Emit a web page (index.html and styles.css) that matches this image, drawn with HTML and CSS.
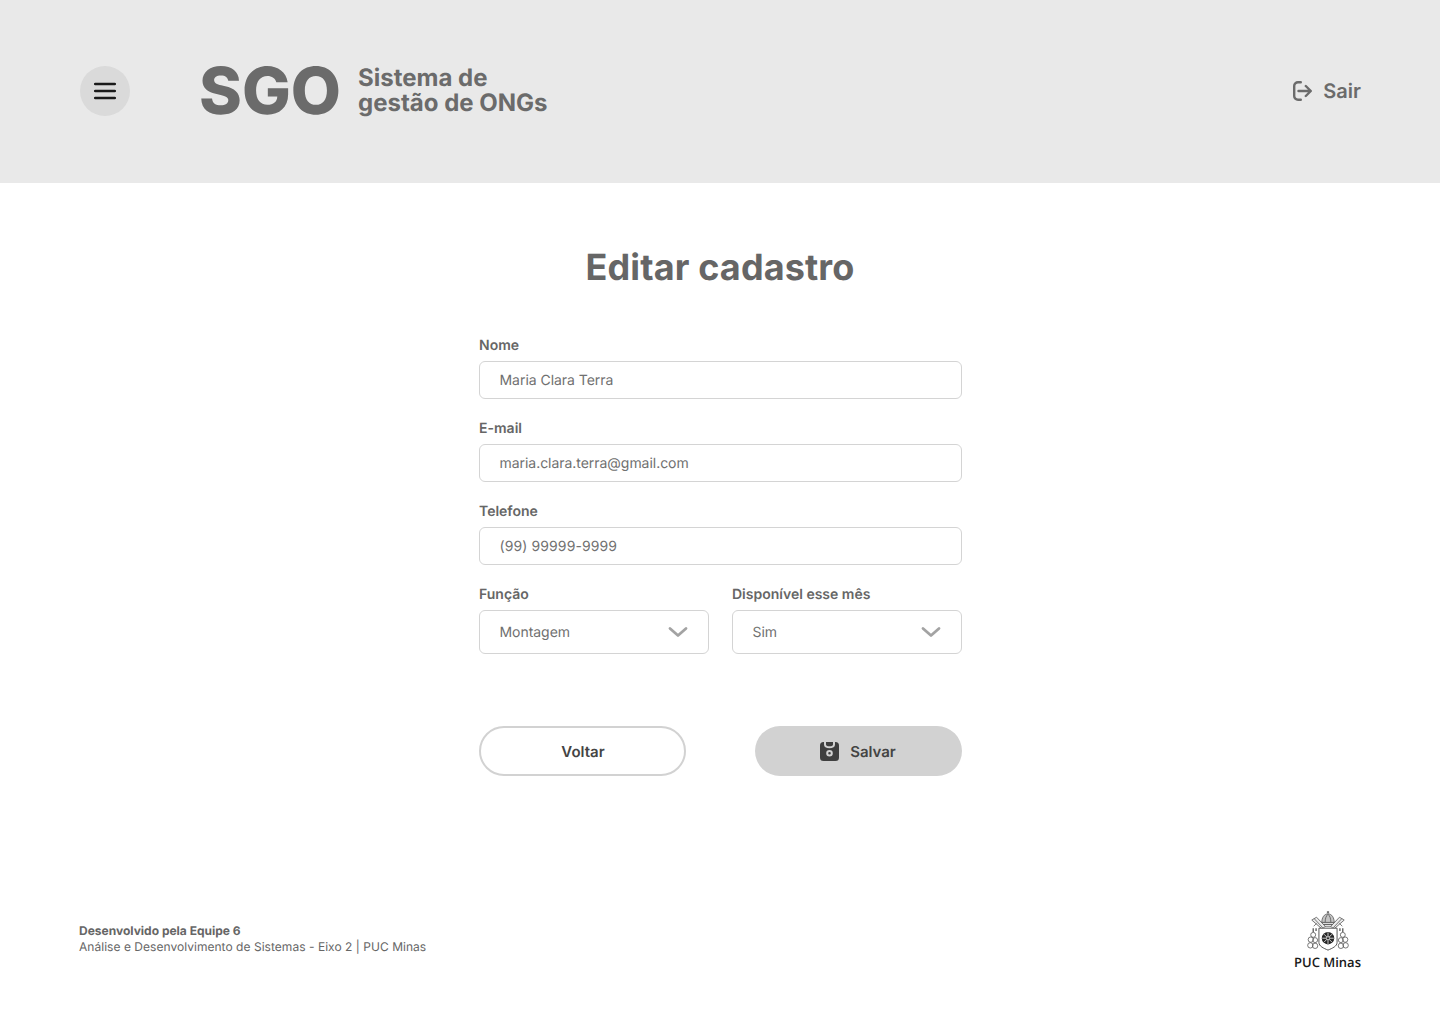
FILE: index.html
```html
<!DOCTYPE html>
<html lang="pt-BR">
<head>
<meta charset="utf-8">
<title>SGO - Editar cadastro</title>
<link rel="stylesheet" href="styles.css">
</head>
<body>
<div class="page">
  <header class="topbar">
    <button class="menu-btn" type="button" aria-label="Menu">
      <svg width="22" height="18" viewBox="0 0 22 18" fill="none" stroke="#1a1a1a" stroke-width="2.600" stroke-linecap="round"><path d="M1.200 2h19.600M1.200 9h19.600M1.200 16h19.600"/></svg>
    </button>
    <div class="brand">
      <span class="brand-name">SGO</span>
      <span class="brand-tag">Sistema de<br>gestão de ONGs</span>
    </div>
    <a class="logout" href="#">
      <svg width="19" height="20" viewBox="0 0 19 20" fill="none" stroke="#6b6b6b" stroke-width="2.400" stroke-linecap="round" stroke-linejoin="round"><path d="M7.800 1.200H5A3.800 3.800 0 0 0 1.200 5v10A3.800 3.800 0 0 0 5 18.800h2.800"/><path d="M5.500 10h12M12.800 5l5 5-5 5"/></svg>
      <span>Sair</span>
    </a>
  </header>

  <main class="content">
    <h1 class="title">Editar cadastro</h1>
    <form class="form">
      <label class="field"><span class="label">Nome</span><span class="input">Maria Clara Terra</span></label>
      <label class="field"><span class="label">E-mail</span><span class="input">maria.clara.terra@gmail.com</span></label>
      <label class="field"><span class="label">Telefone</span><span class="input input-phone">(99) 99999-9999</span></label>
      <div class="row">
        <label class="field"><span class="label">Função</span>
          <span class="input select">Montagem
            <svg width="20" height="12" viewBox="0 0 20 12" fill="none" stroke="#a3a3a3" stroke-width="2.800" stroke-linecap="round" stroke-linejoin="round"><path d="M2 2.500l8 7 8-7"/></svg>
          </span>
        </label>
        <label class="field"><span class="label">Disponível esse mês</span>
          <span class="input select">Sim
            <svg width="20" height="12" viewBox="0 0 20 12" fill="none" stroke="#a3a3a3" stroke-width="2.800" stroke-linecap="round" stroke-linejoin="round"><path d="M2 2.500l8 7 8-7"/></svg>
          </span>
        </label>
      </div>
      <div class="actions">
        <button class="btn btn-outline" type="button">Voltar</button>
        <button class="btn btn-solid" type="button">
          <svg width="19" height="19" viewBox="0 0 19 19"><path fill="#3f3f3f" fill-rule="evenodd" d="M3.500 0H4v2.500C4 5 6 6.300 9.500 6.300S15 5 15 2.500V0h.5A3.500 3.500 0 0 1 19 3.500v12a3.500 3.500 0 0 1-3.500 3.500h-12A3.500 3.500 0 0 1 0 15.500v-12A3.500 3.500 0 0 1 3.500 0zM9.500 8a3.300 3.300 0 1 0 0 6.600 3.300 3.300 0 0 0 0-6.600zm0 2a1.300 1.300 0 1 1 0 2.600 1.300 1.300 0 0 1 0-2.600z"/><path fill="#3f3f3f" d="M6 0h7v2.500c0 1-1 1.800-3.500 1.800S6 3.500 6 2.500z"/></svg>
          <span>Salvar</span>
        </button>
      </div>
    </form>
  </main>

  <footer class="footer">
    <div class="credits">
      <strong>Desenvolvido pela Equipe 6</strong>
      <span class="credits-line">Análise e Desenvolvimento de Sistemas - Eixo 2 | PUC Minas</span>
    </div>
    <div class="puc">
      <svg class="crest" width="42" height="42" viewBox="0 0 44 44" fill="none" stroke="#505050" stroke-width=".8">
        <path d="M22 0v2.500M20.800 1.200h2.400" stroke-width="1"/>
        <path d="M15.500 12c0-5 2.500-9 6.500-9s6.500 4 6.500 9z" fill="#c4c4c4"/>
        <path d="M19 12c0-4 1-7 3-8.500 2 1.500 3 4.500 3 8.500" />
        <path d="M14.500 12h15v2h-15zM14 14h16v2H14z" fill="#fff"/>
        <path d="M5 9.500l5-3 9 9.500-3 3zM39 9.500l-5-3-9 9.500 3 3z" fill="#ececec"/>
        <path d="M7.500 8l9 9.500M36.500 8l-9 9.500M10 13l-3 3M34 13l3 3"/>
        <path d="M12.500 18h19v15c0 4-5 6-9.500 8-4.500-2-9.500-4-9.500-8z" fill="#fff" stroke-width="1"/>
        <circle cx="22" cy="28.500" r="6.500" fill="#262626" stroke="none"/>
        <path d="M22 22.500v12M16 28.500h12M17.800 24.300l8.400 8.400M26.200 24.300l-8.400 8.400" stroke="#fff" stroke-width=".8"/>
        <circle cx="22" cy="28.500" r="1.600" fill="#262626" stroke="#fff" stroke-width=".6"/>
        <path d="M6.500 18v4M37.500 18v4M9.500 18v3M34.500 18v3" stroke-width="1.300"/>
        <circle cx="6.500" cy="25" r="2.600"/><circle cx="37.500" cy="25" r="2.600"/>
        <circle cx="4" cy="30" r="2.800"/><circle cx="40" cy="30" r="2.800"/>
        <circle cx="8.500" cy="30.500" r="2.600"/><circle cx="35.500" cy="30.500" r="2.600"/>
        <circle cx="3.500" cy="36" r="2.800"/><circle cx="40.500" cy="36" r="2.800"/>
        <circle cx="8.500" cy="36.500" r="2.800"/><circle cx="35.500" cy="36.500" r="2.800"/>
      </svg>
      <span class="puc-name">PUC Minas</span>
    </div>
  </footer>
</div>
</body>
</html>
```
FILE: styles.css
```css
* { box-sizing: border-box; }
html, body { margin: 0; padding: 0; background: #fff; }
body { font-family: Inter, "Liberation Sans", sans-serif; color: #666; text-rendering: geometricPrecision; }
.page { width: 1440px; height: 1024px; display: flex; flex-direction: column; }

.topbar { height: 183px; flex: none; background: #e9e9e9; display: flex; align-items: center; padding: 0 79px 1px 80px; }
.menu-btn { width: 50px; height: 50px; border: 0; padding: 0; border-radius: 50%; background: #dadada; display: flex; align-items: center; justify-content: center; flex: none; }
.brand { display: flex; align-items: center; gap: 17px; margin-left: 69px; }
.brand-name { font-size: 65px; font-weight: 800; line-height: 64px; color: #6b6b6b; }
.brand-tag { font-size: 24px; font-weight: 700; line-height: 25px; color: #6b6b6b; position: relative; top: -1px; }
.logout { margin-left: auto; display: flex; align-items: center; gap: 11px; font-size: 20px; font-weight: 600; color: #6b6b6b; text-decoration: none; }

.content { display: flex; flex-direction: column; align-items: center; flex: none; }
.title { margin: 62px 0 0; font-size: 36px; line-height: 44px; font-weight: 700; color: #666; letter-spacing: .13px; }
.form { width: 483px; margin-top: 48px; display: flex; flex-direction: column; gap: 21px; }
.field { display: flex; flex-direction: column; gap: 7px; min-width: 0; }
.label { font-size: 14px; line-height: 17px; font-weight: 600; color: #666; padding-left: .5px; }
.input { height: 38px; display: flex; align-items: center; padding: 0 20px; background: #fff; border: 1px solid #d4d4d4; border-radius: 6px; font-size: 14px; color: #707070; letter-spacing: -.04px; }
.input-phone { letter-spacing: .1px; }
.row { display: grid; grid-template-columns: 230px 230px; justify-content: space-between; }
.select { height: 44px; justify-content: space-between; padding-right: 20px; }

.actions { display: flex; justify-content: space-between; margin-top: 51px; }
.btn { width: 207px; height: 50px; border-radius: 25px; font-family: inherit; font-size: 15px; font-weight: 600; color: #444; display: flex; align-items: center; justify-content: center; gap: 11px; padding: 0; text-rendering: geometricPrecision; }
.btn-outline { background: #fff; border: 2px solid #d2d2d2; padding-left: 2px; }
.btn-solid { background: #d2d2d2; border: 0; }

.footer { margin-top: auto; height: 112px; padding: 0 79px; display: flex; justify-content: space-between; flex: none; }
.credits { display: flex; flex-direction: column; font-size: 12px; line-height: 16px; color: #666; padding-top: 11px; }
.credits strong { font-weight: 700; }
.credits-line { letter-spacing: .035px; }
.puc { display: flex; flex-direction: column; align-items: center; width: 67px; margin-top: -1px; }
.crest { flex: none; }
.puc-name { font-family: "Open Sans", "Noto Sans", sans-serif; font-size: 13px; font-weight: 600; line-height: 16px; color: #1a1a1a; white-space: nowrap; margin-top: 1px; }
```
